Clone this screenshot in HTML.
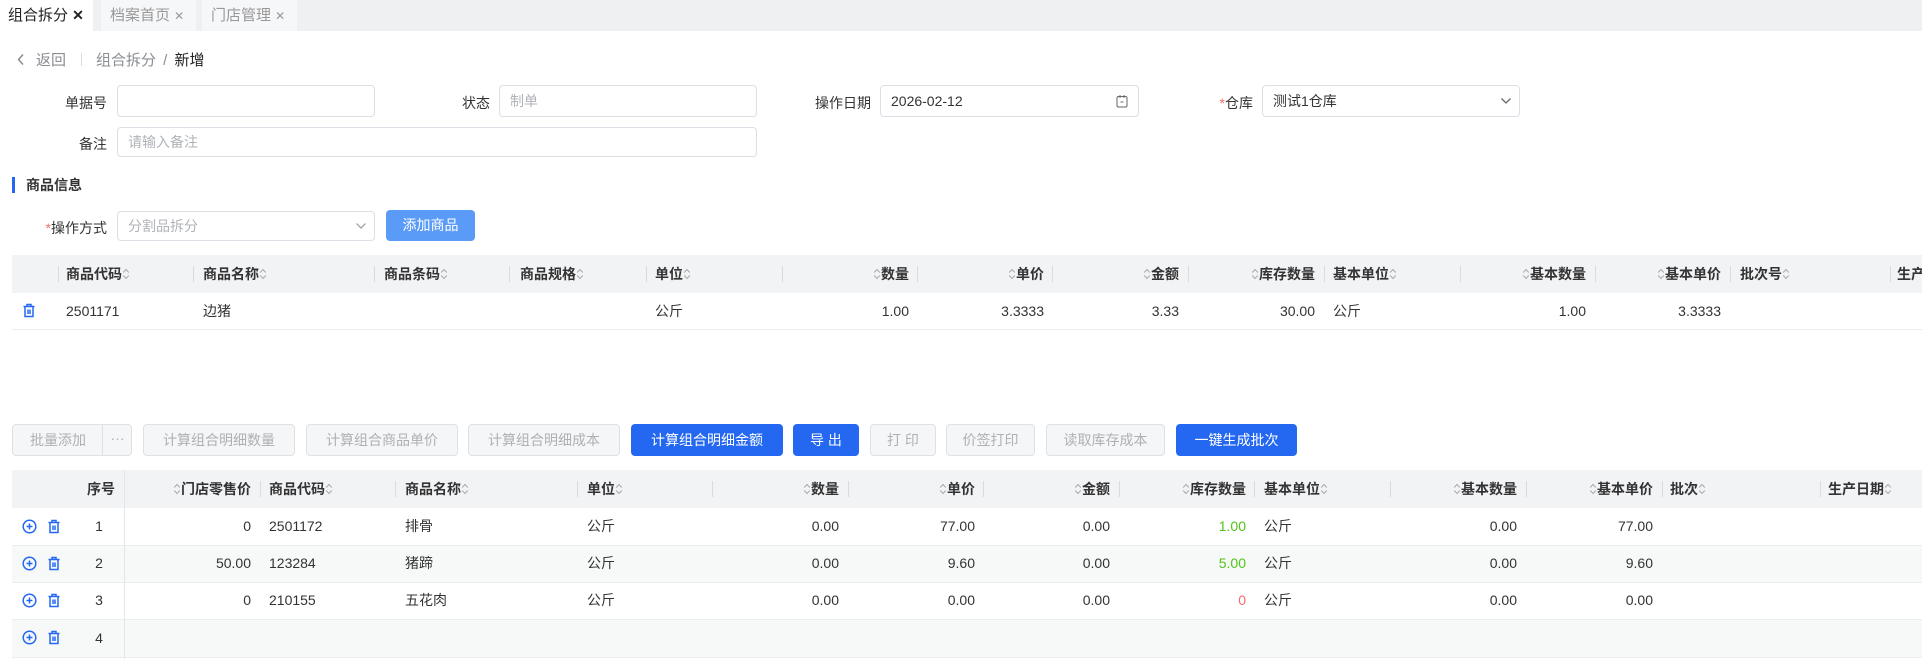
<!DOCTYPE html>
<html><head><meta charset="utf-8">
<style>
*{margin:0;padding:0;box-sizing:border-box}
body{width:1922px;height:659px;overflow:hidden;background:#fff;font-family:"Liberation Sans","Noto Sans CJK SC",sans-serif;color:#333;font-size:14px;position:relative}
.a{position:absolute;white-space:nowrap}
.tab{position:absolute;top:0;height:31px;line-height:31px;font-size:15px;padding-left:8px}
.inp{position:absolute;border:1px solid #dcdfe6;border-radius:4px;background:#fff;font-size:14px;padding-left:10px;color:#333}
.ph{color:#b0b3b8}
.lbl{position:absolute;text-align:right;font-size:14px;color:#333}
.btn{position:absolute;top:424px;height:32px;line-height:30px;border:1px solid #dfe1e5;border-radius:4px;background:#f5f6f7;color:#aeb0b4;text-align:center;font-size:14px}
.btn.b{background:#2468f2;border-color:#2468f2;color:#fff}
.hd{position:absolute;background:#f2f3f5}
.h{position:absolute;font-weight:bold;white-space:nowrap;font-size:14px;color:#333}
.sep{position:absolute;width:1px;height:16px;background:#d9dbe0}
.c{position:absolute;white-space:nowrap;font-size:14px;color:#333}
.r{text-align:right}
.s{display:inline-block;vertical-align:-1px}
.line{position:absolute;height:1px;background:#ebedf0}
</style></head><body>
<!-- tabs -->
<div class="a" style="left:0;top:0;width:1922px;height:31px;background:#eff0f2"></div>
<div class="tab" style="left:0;width:93px;background:#fff;color:#222">组合拆分 <span style="font-size:14px;font-weight:bold">✕</span></div>
<div class="tab" style="left:101px;width:95px;background:#f6f7f8;color:#999;padding-left:9px">档案首页 <span style="font-size:12px">✕</span></div>
<div class="tab" style="left:202px;width:95px;background:#f6f7f8;color:#999;padding-left:9px">门店管理 <span style="font-size:12px">✕</span></div>

<!-- breadcrumb -->
<svg class="a" style="left:16px;top:53px" width="9" height="13"><path d="M7 1.5 L2.5 6.5 L7 11.5" stroke="#888" stroke-width="1.4" fill="none"/></svg>
<div class="a" style="left:36px;top:49px;font-size:15px;color:#8a8d92">返回</div>
<div class="a" style="left:81px;top:53px;width:1px;height:13px;background:#ddd"></div>
<div class="a" style="left:96px;top:49px;font-size:15px;color:#8a8d92">组合拆分 <span style="margin:0 3px">/</span> <span style="color:#222">新增</span></div>

<!-- form -->
<div class="lbl" style="left:30px;width:77px;top:93px">单据号</div>
<div class="inp" style="left:117px;top:85px;width:258px;height:32px"></div>
<div class="lbl" style="left:420px;width:70px;top:93px">状态</div>
<div class="inp" style="left:499px;top:85px;width:258px;height:32px;line-height:30px"><span class="ph">制单</span></div>
<div class="lbl" style="left:790px;width:81px;top:93px">操作日期</div>
<div class="inp" style="left:880px;top:85px;width:259px;height:32px;line-height:30px">2026-02-12</div>
<svg class="a" style="left:1116px;top:94px" width="12" height="14"><rect x="1" y="2.5" width="10" height="10.5" rx="1.5" stroke="#666" fill="none"/><path d="M4 1v3M8 1v3M4.5 8h3" stroke="#666"/></svg>
<div class="lbl" style="left:1200px;width:53px;top:93px"><span style="color:#f56c6c">*</span>仓库</div>
<div class="inp" style="left:1262px;top:85px;width:258px;height:32px;line-height:30px">测试1仓库</div>
<svg class="a" style="left:1500px;top:97px" width="12" height="8"><path d="M1.5 1.5 L6 6 L10.5 1.5" stroke="#666" stroke-width="1.3" fill="none"/></svg>
<div class="lbl" style="left:30px;width:77px;top:134px">备注</div>
<div class="inp" style="left:117px;top:127px;width:640px;height:30px;line-height:28px"><span class="ph">请输入备注</span></div>

<!-- section -->
<div class="a" style="left:12px;top:177px;width:3px;height:16px;background:#2468f2"></div>
<div class="a" style="left:26px;top:175px;font-weight:bold;font-size:14px">商品信息</div>

<div class="lbl" style="left:20px;width:87px;top:218px"><span style="color:#f56c6c">*</span>操作方式</div>
<div class="inp" style="left:117px;top:211px;width:258px;height:30px;line-height:28px"><span class="ph">分割品拆分</span></div>
<svg class="a" style="left:355px;top:222px" width="12" height="8"><path d="M1.5 1.5 L6 6 L10.5 1.5" stroke="#999" stroke-width="1.2" fill="none"/></svg>
<div class="a" style="left:386px;top:210px;width:89px;height:31px;line-height:31px;background:#5a9bf7;color:#fff;border-radius:4px;text-align:center;font-size:14px">添加商品</div>

<!-- table 1 -->
<div class="hd" style="left:12px;top:255px;width:1910px;height:38px"></div>
<div class="line" style="left:12px;top:329px;width:1910px"></div>
<div id="t1"></div>

<!-- buttons -->
<div class="btn" style="left:12px;width:120px;text-align:left"><span style="display:inline-block;width:90px;text-align:center">批量添加</span><span style="position:absolute;left:89px;top:0;height:30px;border-left:1px solid #dfe1e5;width:30px;text-align:center;line-height:26px">···</span></div>
<div class="btn" style="left:143px;width:152px">计算组合明细数量</div>
<div class="btn" style="left:306px;width:152px">计算组合商品单价</div>
<div class="btn" style="left:468px;width:152px">计算组合明细成本</div>
<div class="btn b" style="left:631px;width:152px">计算组合明细金额</div>
<div class="btn b" style="left:793px;width:66px">导 出</div>
<div class="btn" style="left:870px;width:66px">打 印</div>
<div class="btn" style="left:946px;width:89px">价签打印</div>
<div class="btn" style="left:1046px;width:119px">读取库存成本</div>
<div class="btn b" style="left:1176px;width:121px">一键生成批次</div>

<!-- table 2 -->
<div class="hd" style="left:12px;top:470px;width:1910px;height:38px"></div>
<div class="a" style="left:12px;top:545px;width:1910px;height:37px;background:#f7f9f8"></div>
<div class="a" style="left:12px;top:619px;width:1910px;height:38px;background:#f7f9f8"></div>
<div class="line" style="left:12px;top:545px;width:1910px"></div>
<div class="line" style="left:12px;top:582px;width:1910px"></div>
<div class="line" style="left:12px;top:619px;width:1910px"></div>
<div class="line" style="left:12px;top:657px;width:1910px"></div>
<div class="a" style="left:124px;top:470px;width:1px;height:189px;background:#e4e6ea"></div>
<div id="t2"></div>

<script>
var S='<svg class="s" width="8" height="12"><path d="M1.2 4.5 L4 1.5 L6.8 4.5 M1.2 7.5 L4 10.5 L6.8 7.5" stroke="#aaa" stroke-width="1" fill="none"/></svg>';
var TR='<svg width="14" height="15"><path d="M1.5 3.5h11M5 3.5V1.5h4v2M3 3.5v10h8v-10M6 6.5v4.5M8 6.5v4.5" stroke="#2468f2" stroke-width="1.5" fill="none"/></svg>';
var PL='<svg width="15" height="15"><circle cx="7.5" cy="7.5" r="6.3" stroke="#2468f2" stroke-width="1.5" fill="none"/><path d="M7.5 4.5v6M4.5 7.5h6" stroke="#2468f2" stroke-width="1.5"/></svg>';
function el(p,h){var d=document.createElement('div');d.innerHTML=h;while(d.firstChild)p.appendChild(d.firstChild);}
function cell(p,x,y,h,txt,right,cls,extra){ // right aligned if right
  if(right) el(p,'<div class="'+cls+'" style="right:'+(1922-x)+'px;top:'+y+'px;line-height:'+h+'px;'+(extra||'')+'">'+txt+'</div>');
  else el(p,'<div class="'+cls+'" style="left:'+x+'px;top:'+y+'px;line-height:'+h+'px;'+(extra||'')+'">'+txt+'</div>');
}
var t1=document.getElementById('t1');
[58,193,374,509,646,782,917,1052,1188,1324,1460,1595,1730,1890].forEach(function(x){el(t1,'<div class="sep" style="left:'+x+'px;top:266px"></div>');});
var h1=[[66,'商品代码'+S,0],[203,'商品名称'+S,0],[384,'商品条码'+S,0],[520,'商品规格'+S,0],[655,'单位'+S,0],[909,S+'数量',1],[1044,S+'单价',1],[1179,S+'金额',1],[1315,S+'库存数量',1],[1333,'基本单位'+S,0],[1586,S+'基本数量',1],[1721,S+'基本单价',1],[1740,'批次号'+S,0],[1897,'生产日期',0]];
h1.forEach(function(a){cell(t1,a[0],255,38,a[1],a[2],'h');});
el(t1,'<div class="a" style="left:22px;top:303px">'+TR+'</div>');
[[66,'2501171',0],[203,'边猪',0],[655,'公斤',0],[909,'1.00',1],[1044,'3.3333',1],[1179,'3.33',1],[1315,'30.00',1],[1333,'公斤',0],[1586,'1.00',1],[1721,'3.3333',1]].forEach(function(a){cell(t1,a[0],293,36,a[1],a[2],'c');});

var t2=document.getElementById('t2');
[260,395,577,712,848,983,1119,1254,1390,1526,1662,1820].forEach(function(x){el(t2,'<div class="sep" style="left:'+x+'px;top:481px"></div>');});
var h2=[[115,'序号',1],[251,S+'门店零售价',1],[269,'商品代码'+S,0],[405,'商品名称'+S,0],[587,'单位'+S,0],[839,S+'数量',1],[975,S+'单价',1],[1110,S+'金额',1],[1246,S+'库存数量',1],[1264,'基本单位'+S,0],[1517,S+'基本数量',1],[1653,S+'基本单价',1],[1670,'批次'+S,0],[1828,'生产日期'+S,0]];
h2.forEach(function(a){cell(t2,a[0],470,38,a[1],a[2],'h');});
var rows=[[508,'1','0','2501172','排骨','0.00','77.00','0.00','1.00','#52c41a','0.00','77.00'],
[545,'2','50.00','123284','猪蹄','0.00','9.60','0.00','5.00','#52c41a','0.00','9.60'],
[582,'3','0','210155','五花肉','0.00','0.00','0.00','0','#f56c6c','0.00','0.00']];
rows.forEach(function(r){var y=r[0];
 el(t2,'<div class="a" style="left:22px;top:'+(y+11)+'px">'+PL+'</div><div class="a" style="left:47px;top:'+(y+11)+'px">'+TR+'</div>');
 el(t2,'<div class="c" style="left:84px;width:30px;text-align:center;top:'+y+'px;line-height:37px">'+r[1]+'</div>');
 cell(t2,251,y,37,r[2],1,'c');cell(t2,269,y,37,r[3],0,'c');cell(t2,405,y,37,r[4],0,'c');cell(t2,587,y,37,'公斤',0,'c');
 cell(t2,839,y,37,r[5],1,'c');cell(t2,975,y,37,r[6],1,'c');cell(t2,1110,y,37,r[7],1,'c');
 cell(t2,1246,y,37,r[8],1,'c','color:'+r[9]);cell(t2,1264,y,37,'公斤',0,'c');cell(t2,1517,y,37,r[10],1,'c');cell(t2,1653,y,37,r[11],1,'c');
});
el(t2,'<div class="a" style="left:22px;top:630px">'+PL+'</div><div class="a" style="left:47px;top:630px">'+TR+'</div><div class="c" style="left:84px;width:30px;text-align:center;top:619px;line-height:38px">4</div>');
</script>
</body></html>
